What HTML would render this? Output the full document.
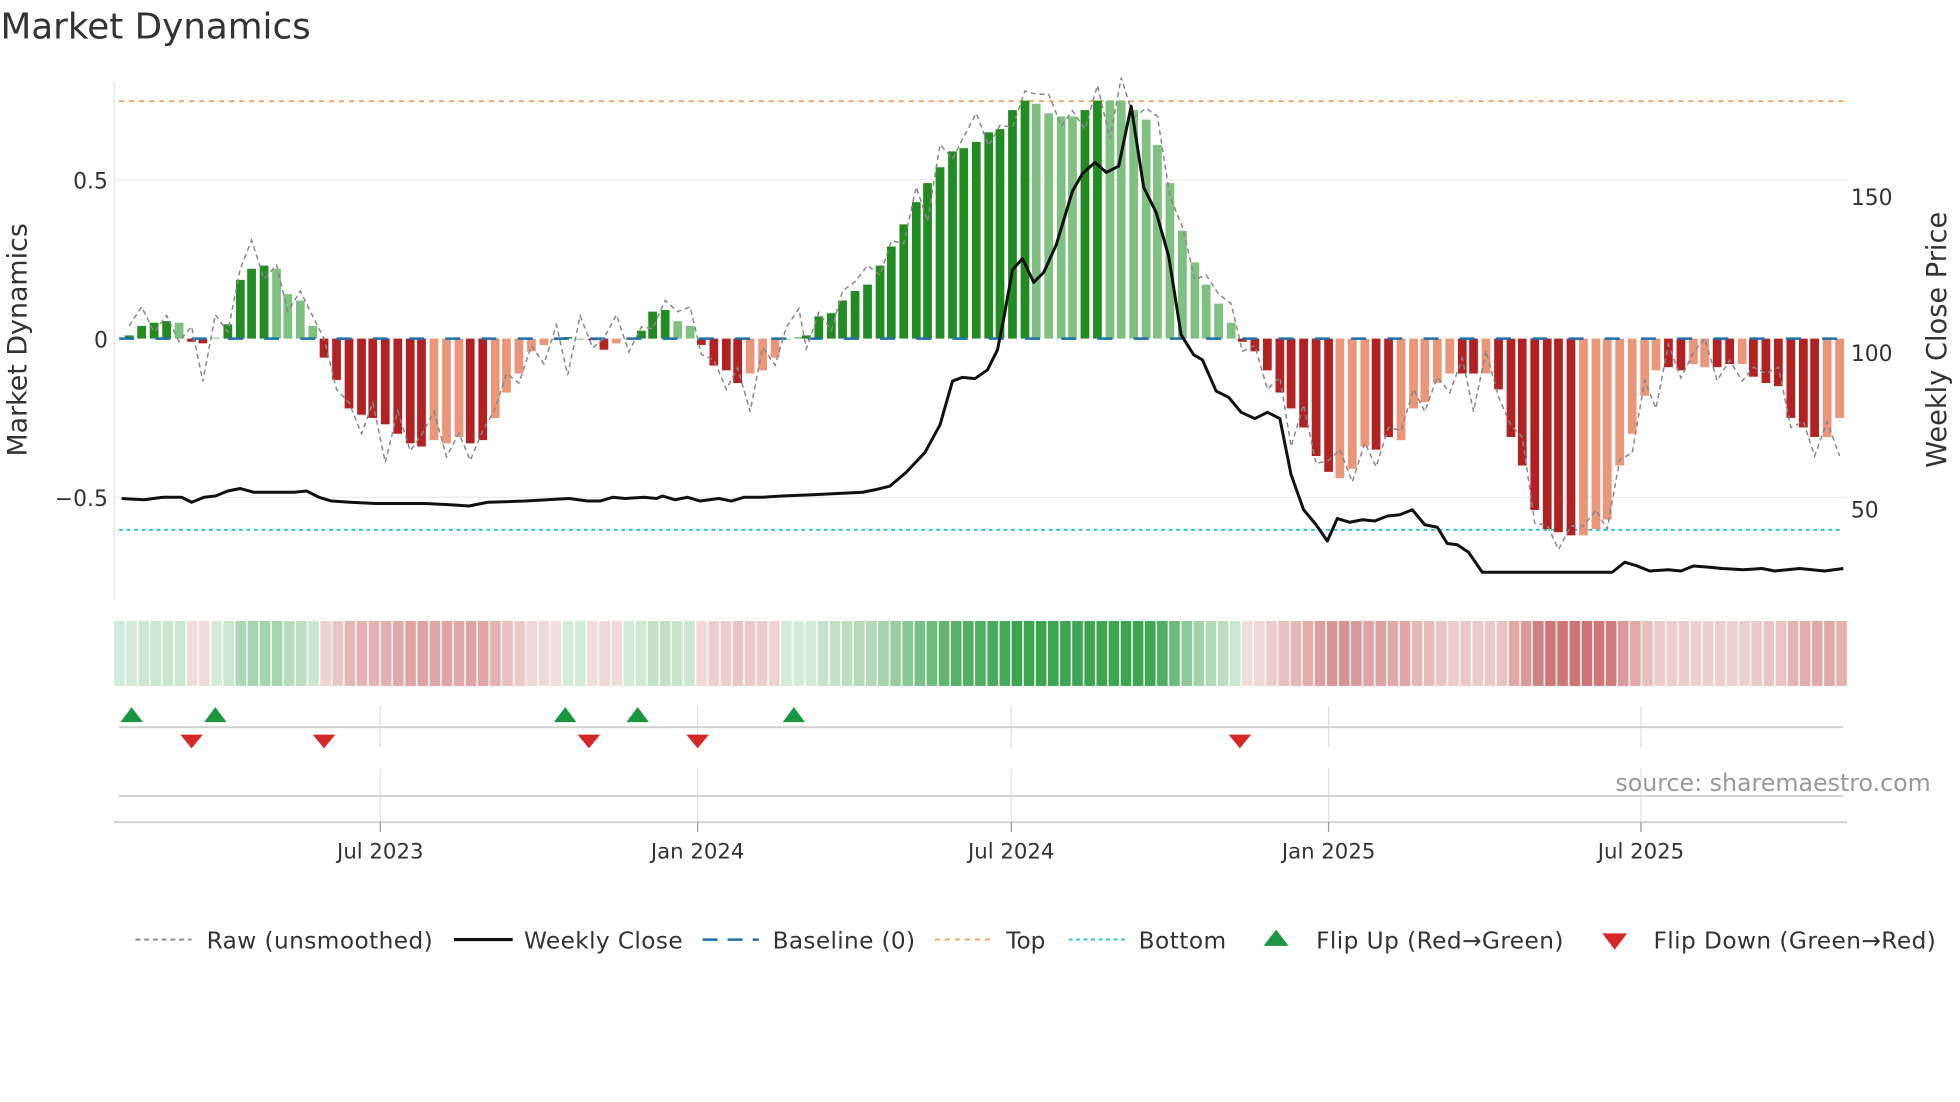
<!DOCTYPE html>
<html><head><meta charset="utf-8"><style>
html,body{margin:0;padding:0;background:#fff;width:1960px;height:1102px;overflow:hidden}
svg{display:block}
text{font-family:"DejaVu Sans","Liberation Sans",sans-serif;fill:#333}
</style></head><body>
<svg id="s" width="1960" height="1102" viewBox="0 0 1568 882" xmlns="http://www.w3.org/2000/svg">
<text x="0" y="31" font-size="28.6">Market Dynamics</text>
<line x1="91" y1="65" x2="91" y2="480" stroke="#e4e4e4" stroke-width="1"/>
<line x1="91" y1="144" x2="1478" y2="144" stroke="#ececec"/>
<line x1="91" y1="398" x2="1478" y2="398" stroke="#ececec"/>
<text x="86" y="151" font-size="17.5" text-anchor="end">0.5</text>
<text x="86" y="278" font-size="17.5" text-anchor="end">0</text>
<text x="86" y="405" font-size="17.5" text-anchor="end">−0.5</text>
<text x="1481" y="164" font-size="17.5">150</text>
<text x="1481" y="289" font-size="17.5">100</text>
<text x="1481" y="414" font-size="17.5">50</text>
<text transform="translate(21,272) rotate(-90)" font-size="21.5" text-anchor="middle">Market Dynamics</text>
<text transform="translate(1557,272) rotate(-90)" font-size="21.8" text-anchor="middle">Weekly Close Price</text>
<line x1="95" y1="81" x2="1475" y2="81" stroke="#f4a460" stroke-width="1.5" stroke-dasharray="4,4"/>
<line x1="95" y1="424" x2="1475" y2="424" stroke="#20c0d0" stroke-width="1.5" stroke-dasharray="3,3"/>
<g id="bars"></g>
<line x1="95" y1="271" x2="1475" y2="271" stroke="#1f6fa8" stroke-width="2" stroke-dasharray="12,17"/>
<polyline id="raw" fill="none" stroke="#888" stroke-width="1.2" stroke-dasharray="4,3"/>
<polyline id="price" fill="none" stroke="#111" stroke-width="2.4" stroke-linejoin="round"/>
<g id="heat"></g>
<g stroke="#e2e2e2">
<line x1="304" y1="565" x2="304" y2="598"/><line x1="558" y1="565" x2="558" y2="598"/><line x1="809" y1="565" x2="809" y2="598"/><line x1="1063" y1="565" x2="1063" y2="598"/><line x1="1313" y1="565" x2="1313" y2="598"/>
<line x1="304" y1="615" x2="304" y2="658"/><line x1="558" y1="615" x2="558" y2="658"/><line x1="809" y1="615" x2="809" y2="658"/><line x1="1063" y1="615" x2="1063" y2="658"/><line x1="1313" y1="615" x2="1313" y2="658"/>
</g>
<line x1="95" y1="582" x2="1475" y2="582" stroke="#d0d0d0" stroke-width="1.5"/>
<line x1="95" y1="637" x2="1475" y2="637" stroke="#d0d0d0" stroke-width="1.5"/>
<line x1="91" y1="658" x2="1478" y2="658" stroke="#d0d0d0" stroke-width="1.5"/>
<g stroke="#999"><line x1="304" y1="658" x2="304" y2="666"/><line x1="558" y1="658" x2="558" y2="666"/><line x1="809" y1="658" x2="809" y2="666"/><line x1="1063" y1="658" x2="1063" y2="666"/><line x1="1313" y1="658" x2="1313" y2="666"/></g>
<g id="marks"></g>
<text x="1545" y="633" font-size="19" text-anchor="end" style="fill:#999">source: sharemaestro.com</text>
<g font-size="17" text-anchor="middle">
<text x="304" y="687">Jul 2023</text><text x="558" y="687">Jan 2024</text><text x="809" y="687">Jul 2024</text><text x="1063" y="687">Jan 2025</text><text x="1313" y="687">Jul 2025</text>
</g>
<g font-size="18.6">
<line x1="108" y1="752" x2="153" y2="752" stroke="#888" stroke-width="1.5" stroke-dasharray="4,3"/><text x="165" y="759" textLength="181">Raw (unsmoothed)</text>
<line x1="363" y1="752" x2="410" y2="752" stroke="#111" stroke-width="2.5"/><text x="419" y="759" textLength="127">Weekly Close</text>
<line x1="562" y1="752" x2="607" y2="752" stroke="#1f6fa8" stroke-width="2" stroke-dasharray="12,8"/><text x="618" y="759" textLength="114">Baseline (0)</text>
<line x1="748" y1="752" x2="793" y2="752" stroke="#f4a460" stroke-width="1.5" stroke-dasharray="4,4"/><text x="805" y="759">Top</text>
<line x1="855" y1="752" x2="900" y2="752" stroke="#20c0d0" stroke-width="1.5" stroke-dasharray="3,3"/><text x="911" y="759" textLength="70">Bottom</text>
<polygon points="1021,744 1031,757 1011,757" fill="#1a9641"/><text x="1053" y="759" textLength="198">Flip Up (Red→Green)</text>
<polygon points="1282,747 1302,747 1292,760" fill="#d62728"/><text x="1323" y="759" textLength="226">Flip Down (Green→Red)</text>
</g>
</svg>
<script>
var d=[[103,.01,'G'],[113,.04,'G'],[123,.05,'G'],[133,.055,'G'],[143,.05,'g'],[153,-.01,'R'],[162,-.015,'R'],[172,.003,'g'],[182,.045,'G'],[192,.185,'G'],[201,.22,'G'],[211,.23,'G'],[221,.22,'g'],[230,.14,'g'],[240,.12,'g'],[250,.04,'g'],[259,-.06,'R'],[269,-.13,'R'],[279,-.22,'R'],[289,-.24,'R'],[298,-.25,'R'],[308,-.27,'R'],[318,-.3,'R'],[328,-.33,'R'],[337,-.34,'R'],[347,-.32,'r'],[357,-.33,'r'],[367,-.31,'r'],[376,-.33,'R'],[386,-.32,'R'],[396,-.25,'r'],[405,-.17,'r'],[415,-.11,'r'],[425,-.04,'r'],[435,-.02,'r'],[445,-.005,'r'],[454,.005,'G'],[464,.0,'g'],[474,-.005,'R'],[483,-.035,'R'],[493,-.015,'r'],[503,.0,'g'],[513,.025,'G'],[522,.085,'G'],[532,.09,'G'],[542,.055,'g'],[552,.04,'g'],[561,-.02,'R'],[571,-.085,'R'],[581,-.1,'R'],[590,-.14,'R'],[600,-.11,'r'],[610,-.1,'r'],[620,-.06,'r'],[629,.0,'g'],[639,.005,'g'],[645,.01,'G'],[655,.07,'G'],[665,.08,'G'],[674,.12,'G'],[684,.15,'G'],[694,.17,'G'],[704,.23,'G'],[713,.29,'G'],[723,.36,'G'],[733,.43,'G'],[742,.49,'G'],[752,.54,'G'],[762,.59,'G'],[771,.6,'G'],[781,.62,'G'],[791,.65,'G'],[800,.66,'G'],[810,.72,'G'],[820,.75,'G'],[829,.74,'g'],[839,.71,'g'],[849,.7,'g'],[858,.7,'g'],[868,.72,'G'],[878,.75,'G'],[888,.75,'g'],[897,.75,'g'],[907,.72,'g'],[917,.69,'g'],[926,.61,'g'],[936,.49,'g'],[946,.34,'g'],[956,.24,'g'],[965,.17,'g'],[975,.11,'g'],[985,.05,'g'],[994,-.01,'R'],[1004,-.04,'R'],[1014,-.1,'R'],[1024,-.17,'R'],[1033,-.22,'R'],[1043,-.28,'R'],[1053,-.37,'R'],[1063,-.42,'R'],[1072,-.44,'r'],[1082,-.41,'r'],[1092,-.34,'r'],[1101,-.35,'R'],[1111,-.31,'R'],[1121,-.32,'r'],[1131,-.22,'r'],[1140,-.2,'r'],[1150,-.14,'r'],[1160,-.11,'r'],[1170,-.11,'R'],[1179,-.11,'R'],[1189,-.11,'r'],[1199,-.16,'R'],[1209,-.31,'R'],[1218,-.4,'R'],[1228,-.54,'R'],[1238,-.6,'R'],[1247,-.61,'R'],[1257,-.62,'R'],[1267,-.62,'r'],[1277,-.6,'r'],[1286,-.57,'r'],[1296,-.4,'r'],[1306,-.3,'r'],[1316,-.18,'r'],[1325,-.1,'r'],[1335,-.09,'R'],[1345,-.1,'R'],[1355,-.08,'r'],[1364,-.09,'r'],[1374,-.09,'R'],[1384,-.08,'R'],[1394,-.08,'r'],[1403,-.12,'R'],[1413,-.14,'R'],[1423,-.15,'R'],[1433,-.25,'R'],[1443,-.28,'R'],[1452,-.31,'R'],[1462,-.31,'r'],[1472,-.25,'r']];
var col={G:'#228b22',g:'#80c080',R:'#b22222',r:'#e9967a'};
var b='',raw=[],h='';
var ns=[.05,.1,-.05,.03,-.1,.08,-.2,.12,-.04,.06,.15,-.07,.02,-.09,.05];
d.forEach(function(e,i){var y0=271,y=271-e[1]*254;b+='<rect x="'+(e[0]-3.5)+'" y="'+Math.min(y,y0)+'" width="7" height="'+Math.max(Math.abs(y-y0),0.8)+'" fill="'+col[e[2]]+'"/>';
raw.push(e[0]+','+(271-(e[1]+ns[i%15]*0.6)*254).toFixed(1));});
document.getElementById('bars').innerHTML=b;
document.getElementById('raw').setAttribute('points',raw.join(' '));
var n=143,w=(1479-91)/n;
for(var i=0;i<n;i++){var x=91+i*w,cx=x+w/2,v=0,best=1e9;d.forEach(function(e){var dd=Math.abs(e[0]-cx);if(dd<best){best=dd;v=e[1];}});
var a=Math.min(1,0.22+Math.abs(v)*1.1);var c;
if(v>=0){c='rgb('+Math.round(255-(255-60)*a)+','+Math.round(255-(255-165)*a)+','+Math.round(255-(255-80)*a)+')';}
else{c='rgb('+Math.round(255-(255-200)*a)+','+Math.round(255-(255-100)*a)+','+Math.round(255-(255-100)*a)+')';}
h+='<rect x="'+x.toFixed(1)+'" y="497" width="'+(w-1.2).toFixed(1)+'" height="52" fill="'+c+'"/>';}
document.getElementById('heat').innerHTML=h;
var p=[[97,399],[115,400],[130,398],[145,398],[153,402],[163,398],[172,397],[182,393],[192,391],[203,394],[220,394],[235,394],[245,393],[255,398],[265,401],[280,402],[300,403],[320,403],[340,403],[360,404],[375,405],[390,402],[420,401],[455,399],[470,401],[480,401],[490,398],[500,399],[515,398],[525,399],[530,397],[540,400],[550,398],[560,401],[575,399],[585,401],[595,398],[610,398],[625,397],[650,396],[670,395],[690,394],[700,392],[712,389],[725,378],[740,362],[752,340],[762,305],[770,302],[780,303],[790,296],[798,280],[803,255],[810,216],[818,207],[827,226],[835,218],[845,196],[858,153],[866,139],[876,130],[885,138],[895,133],[905,85],[915,150],[925,170],[935,205],[945,268],[955,284],[962,288],[973,313],[983,318],[993,330],[1004,335],[1014,330],[1024,335],[1033,380],[1043,408],[1053,420],[1062,433],[1070,415],[1080,418],[1090,416],[1100,417],[1110,413],[1120,412],[1130,408],[1140,420],[1150,422],[1158,435],[1166,436],[1175,442],[1186,458],[1290,458],[1300,450],[1310,453],[1320,457],[1335,456],[1345,457],[1355,453],[1368,454],[1378,455],[1395,456],[1410,455],[1420,457],[1430,456],[1440,455],[1450,456],[1460,457],[1475,455]];
document.getElementById('price').setAttribute('points',p.map(function(q){return q.join(',')}).join(' '));
var m='';[105,172,452,510,635].forEach(function(x){m+='<polygon points="'+x+',566 '+(x+9)+',578 '+(x-9)+',578" fill="#1a9641"/>';});
[153,259,471,558,992].forEach(function(x){m+='<polygon points="'+(x-9)+',588 '+(x+9)+',588 '+x+',599" fill="#d62728"/>';});
document.getElementById('marks').innerHTML=m;
</script>
</body></html>
